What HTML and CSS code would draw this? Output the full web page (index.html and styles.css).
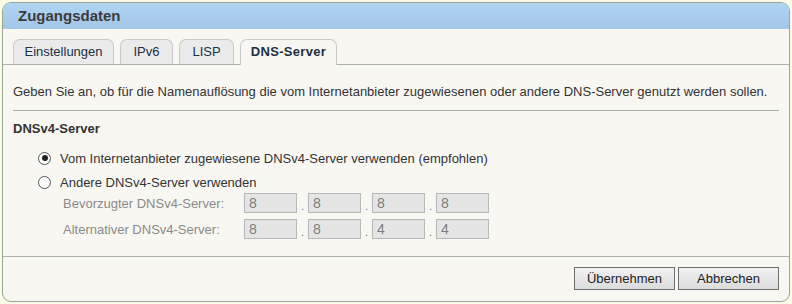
FILE: index.html
```html
<!DOCTYPE html>
<html lang="de">
<head>
<meta charset="UTF-8">
<title>Zugangsdaten</title>
<link rel="stylesheet" href="styles.css">
</head>
<body>
<div class="panel">
  <div class="panel-head">Zugangsdaten</div>
  <div class="tabs">
    <div class="tab tab-settings">Einstellungen</div>
    <div class="tab tab-ipv6">IPv6</div>
    <div class="tab tab-lisp">LISP</div>
    <div class="tab tab-dns active">DNS-Server</div>
  </div>
  <div class="content">
    <p class="intro">Geben Sie an, ob für die Namenauflösung die vom Internetanbieter zugewiesenen oder andere DNS-Server genutzt werden sollen.</p>
    <h3>DNSv4-Server</h3>
    <label class="radio first"><span class="dot checked"></span>Vom Internetanbieter zugewiesene DNSv4-Server verwenden (empfohlen)</label>
    <label class="radio"><span class="dot"></span>Andere DNSv4-Server verwenden</label>
    <div class="ip-row first">
      <span class="ip-label">Bevorzugter DNSv4-Server:</span>
      <span class="octet">8</span><span class="sep">.</span>
      <span class="octet">8</span><span class="sep">.</span>
      <span class="octet">8</span><span class="sep">.</span>
      <span class="octet">8</span>
    </div>
    <div class="ip-row">
      <span class="ip-label">Alternativer DNSv4-Server:</span>
      <span class="octet">8</span><span class="sep">.</span>
      <span class="octet">8</span><span class="sep">.</span>
      <span class="octet">4</span><span class="sep">.</span>
      <span class="octet">4</span>
    </div>
  </div>
  <div class="footer">
    <button>Übernehmen</button>
    <button>Abbrechen</button>
  </div>
</div>
</body>
</html>
```

FILE: styles.css
```css
body {
  font-family: Arial, "Liberation Sans", sans-serif;
  font-size: 13px;
  margin: 0;
  padding: 2px;
  background: #fbfbe8;
  color: #333;
}
.panel {
  width: 786px;
  height: 298px;
  border: 1px solid #95a895;
  border-radius: 9px;
  background: #f8f7f2;
  overflow: hidden;
  display: flex;
  flex-direction: column;
}
.panel-head {
  height: 26px;
  line-height: 26px;
  padding-left: 15px;
  background: linear-gradient(#b0d4f4, #a3c6e7);
  font-size: 15px;
  font-weight: bold;
  color: #3b3b3b;
}
.tabs {
  display: flex;
  gap: 6px;
  padding: 10px 0 0 10px;
  border-bottom: 1px solid #a9b2aa;
}
.tab {
  box-sizing: border-box;
  height: 25px;
  line-height: 24px;
  text-align: center;
  background: #ebebeb;
  border: 1px solid #c9c9c9;
  border-bottom: none;
  border-radius: 7px 7px 0 0;
  color: #223044;
}
.tab-settings { width: 101px; }
.tab-ipv6 { width: 53px; }
.tab-lisp { width: 55px; }
.tab-dns { width: 97px; }
.tab.active {
  background: #f8f7f2;
  font-weight: bold;
  letter-spacing: 0.3px;
  margin-bottom: -1px;
  height: 26px;
}
.content {
  flex: 1;
  padding: 0 10px;
  border-bottom: 1px solid #a9b2aa;
}
.intro {
  margin: 19px 0 0;
  padding-bottom: 10px;
  line-height: 16px;
  border-bottom: 1px solid #a9b2aa;
}
h3 {
  font-size: 13px;
  margin: 10px 0 0;
  line-height: 16px;
}
.radio {
  display: flex;
  align-items: center;
  margin-left: 25px;
  height: 24px;
}
.radio.first {
  margin-top: 9px;
}
.dot {
  width: 11px;
  height: 11px;
  border: 1px solid #555;
  border-radius: 50%;
  background: #fff;
  margin-right: 9px;
  display: flex;
  align-items: center;
  justify-content: center;
}
.dot.checked::after {
  content: "";
  width: 6px;
  height: 6px;
  border-radius: 50%;
  background: #222;
}
.ip-row {
  display: flex;
  align-items: flex-end;
  margin-left: 50px;
  height: 20px;
  margin-bottom: 6px;
}
.ip-row.first {
  margin-top: -1px;
}
.ip-label {
  width: 181px;
  color: #8a8a8a;
  align-self: center;
}
.octet {
  width: 47px;
  height: 18px;
  line-height: 18px;
  padding-left: 4px;
  background: #e5e5e5;
  border: 1px solid #b7b7b7;
  color: #7d7d7d;
  font-size: 14px;
}
.sep {
  width: 11px;
  text-align: center;
  color: #777;
  font-size: 11px;
  line-height: 14px;
}
.footer {
  height: 44px;
  display: flex;
  justify-content: flex-end;
  align-items: flex-start;
  gap: 3px;
  padding: 10px 10px 0 0;
  box-sizing: border-box;
}
button {
  width: 101px;
  height: 23px;
  font-family: inherit;
  font-size: 13px;
  color: #222;
  background: linear-gradient(#f2f2f2, #dcdcdc);
  border: 1px solid #707070;
  border-radius: 0;
  padding: 0;
}
```
